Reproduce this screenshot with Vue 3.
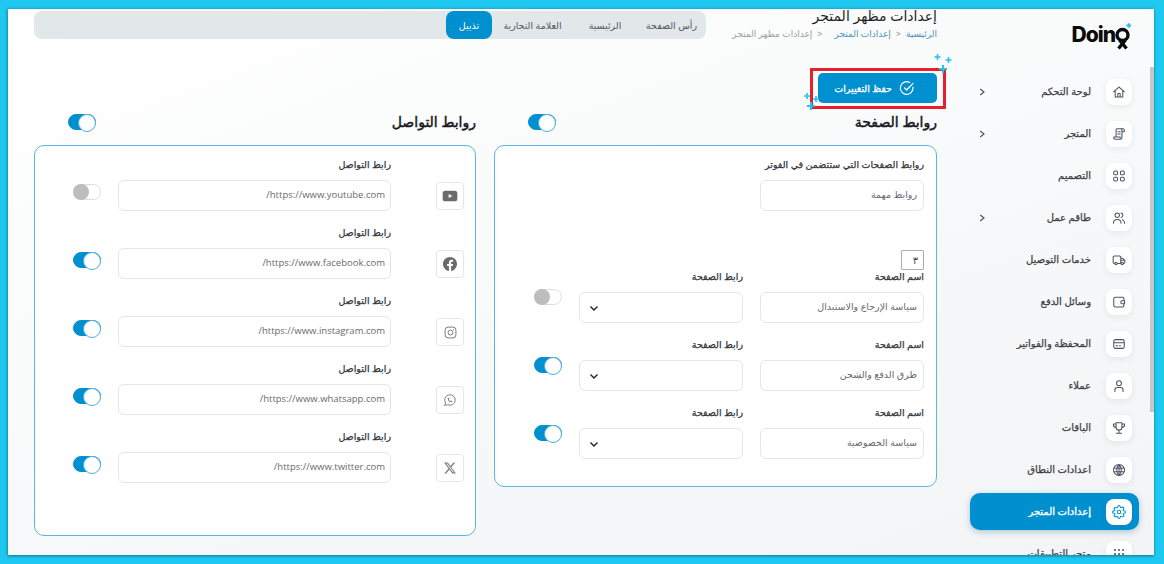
<script setup>
const icons = {
  home: 'M3 11.5 12 3.5l9 8M5.5 9.5V20.5h13V9.5M10 20.5v-6h4v6',
  scroll: 'M8 3h11a2 2 0 0 1 2 2v3h-4M17 8V5a2 2 0 0 0-2-2M7 17V5a2 2 0 0 1 2-2M17 5v13a3 3 0 0 1-3 3H5a2 2 0 0 1-2-2v-2h11v2M10 8h4M10 12h4',
  grid: 'M5 3.5h2.5a2 2 0 0 1 2 2V8a2 2 0 0 1-2 2H5a2 2 0 0 1-2-2V5.500a2 2 0 0 1 2-2ZM16.500 3.500H19a2 2 0 0 1 2 2V8a2 2 0 0 1-2 2h-2.500a2 2 0 0 1-2-2V5.500a2 2 0 0 1 2-2ZM5 14h2.500a2 2 0 0 1 2 2v2.500a2 2 0 0 1-2 2H5a2 2 0 0 1-2-2V16a2 2 0 0 1 2-2ZM16.500 14H19a2 2 0 0 1 2 2v2.500a2 2 0 0 1-2 2h-2.500a2 2 0 0 1-2-2V16a2 2 0 0 1 2-2Z',
  users: 'M9 3.500a3.800 3.800 0 1 1 0 7.600 3.800 3.800 0 0 1 0-7.600ZM2.500 21c0-4 2.800-6.500 6.500-6.500s6.500 2.500 6.500 6.500M15.500 3.500a3.800 3.800 0 0 1 0 7.500M18 14.800c2.200.8 3.500 3 3.500 6.200',
  truck: 'M5 18H4a2 2 0 0 1-2-2V7a2 2 0 0 1 2-2h9a2 2 0 0 1 2 2v11H9M15 9h3.500L22 12.500V16a2 2 0 0 1-2 2h-1M15 18h.500M5 18a2 2 0 1 0 4 0 2 2 0 0 0-4 0ZM15.500 18a2 2 0 1 0 4 0 2 2 0 0 0-4 0ZM15 12.500h7',
  wallet: 'M20.500 9V6.500a2.500 2.500 0 0 0-2.500-2.500H6a3 3 0 0 0-3 3v10.500a3 3 0 0 0 3 3h12a2.500 2.500 0 0 0 2.500-2.500V16M21.500 10h-4a2.500 2.500 0 0 0 0 5h4Z',
  card: 'M6 4.500h12a3 3 0 0 1 3 3v9a3 3 0 0 1-3 3H6a3 3 0 0 1-3-3v-9a3 3 0 0 1 3-3ZM3 10h18M7 15h2.500M13 15h1.500',
  user: 'M12 3a4.200 4.200 0 1 1 0 8.400A4.200 4.200 0 0 1 12 3ZM5 21.500V19c0-2.800 2.200-4.500 4.500-4.500h5c2.300 0 4.500 1.700 4.500 4.500v2.500',
  trophy: 'M7 3h10v7.500a5 5 0 0 1-10 0ZM7 5H2.500v1.500A4.500 4.500 0 0 0 7 11M17 5h4.500v1.500A4.500 4.500 0 0 1 17 11M12 15.500V20M7.500 21h9',
  globe: 'M12 2.500a9.500 9.500 0 1 1 0 19 9.500 9.500 0 0 1 0-19ZM12 2.500c-5.200 5-5.200 14 0 19M12 2.500c5.200 5 5.200 14 0 19M12 2.500v19M3 9h18M3 15h18',
  gear: 'M12 9a3 3 0 1 1 0 6 3 3 0 0 1 0-6ZM19.400 15a1.650 1.650 0 0 0 .33 1.820l.06.06a2 2 0 0 1 0 2.830 2 2 0 0 1-2.830 0l-.06-.06a1.650 1.650 0 0 0-1.820-.33 1.650 1.650 0 0 0-1 1.510V21a2 2 0 0 1-2 2 2 2 0 0 1-2-2v-.09A1.650 1.650 0 0 0 9 19.400a1.650 1.650 0 0 0-1.820.33l-.06.06a2 2 0 0 1-2.830 0 2 2 0 0 1 0-2.830l.06-.06a1.650 1.650 0 0 0 .33-1.820 1.650 1.650 0 0 0-1.510-1H3a2 2 0 0 1-2-2 2 2 0 0 1 2-2h.09A1.650 1.650 0 0 0 4.600 9a1.650 1.650 0 0 0-.33-1.820l-.06-.06a2 2 0 0 1 0-2.830 2 2 0 0 1 2.830 0l.06.06a1.650 1.650 0 0 0 1.820.33H9a1.650 1.650 0 0 0 1-1.510V3a2 2 0 0 1 2-2 2 2 0 0 1 2 2v.09a1.650 1.650 0 0 0 1 1.510 1.650 1.650 0 0 0 1.820-.33l.06-.06a2 2 0 0 1 2.830 0 2 2 0 0 1 0 2.830l-.06.06a1.650 1.650 0 0 0-.33 1.820V9a1.650 1.650 0 0 0 1.510 1H21a2 2 0 0 1 2 2 2 2 0 0 1-2 2h-.09a1.650 1.650 0 0 0-1.510 1Z',
  dots: 'M5 5h.01M12 5h.01M19 5h.01M5 12h.01M12 12h.01M19 12h.01M5 19h.01M12 19h.01M19 19h.01'
}

const nav = [
  { label: 'لوحة التحكم', icon: 'home', more: true },
  { label: 'المتجر', icon: 'scroll', more: true },
  { label: 'التصميم', icon: 'grid' },
  { label: 'طاقم عمل', icon: 'users', more: true },
  { label: 'خدمات التوصيل', icon: 'truck' },
  { label: 'وسائل الدفع', icon: 'wallet' },
  { label: 'المحفظة والفواتير', icon: 'card' },
  { label: 'عملاء', icon: 'user' },
  { label: 'الباقات', icon: 'trophy' },
  { label: 'اعدادات النطاق', icon: 'globe' },
  { label: 'إعدادات المتجر', icon: 'gear', active: true },
  { label: 'متجر التطبيقات', icon: 'dots' }
]

const tabs = [
  { label: 'رأس الصفحة' },
  { label: 'الرئيسية' },
  { label: 'العلامة التجارية' },
  { label: 'تذييل', active: true }
]

const pages = [
  { name: 'سياسة الإرجاع والاستبدال', on: false },
  { name: 'طرق الدفع والشحن', on: true },
  { name: 'سياسة الخصوصية', on: true }
]

const socials = [
  { key: 'youtube', url: 'https://www.youtube.com/', on: false },
  { key: 'facebook', url: 'https://www.facebook.com/', on: true },
  { key: 'instagram', url: 'https://www.instagram.com/', on: true },
  { key: 'whatsapp', url: 'https://www.whatsapp.com/', on: true },
  { key: 'x', url: 'https://www.twitter.com/', on: true }
]
</script>

<template>
  <div class="frame" dir="rtl">
    <div class="panel">
      <aside class="sidebar">
        <div class="logo" dir="ltr">
          <span class="logo-text">Doin</span>
          <svg class="logo-mark" width="17" height="28" viewBox="0 0 17 28">
            <circle cx="7.500" cy="13" r="5.500" fill="none" stroke="#0b0b0b" stroke-width="3.400" />
            <path d="M3.500 26.500 10.500 18M11.500 26.500 4.500 18" fill="none" stroke="#0b0b0b" stroke-width="3.400" />
            <path d="M11.500 3.500h4.500M13.750 1.250v4.500" stroke="#22c3ee" stroke-width="2" />
          </svg>
        </div>
        <nav class="nav">
          <div v-for="item in nav" :key="item.label" class="nav-row" :class="{ active: item.active }">
            <span class="nav-icon">
              <svg width="14" height="14" viewBox="0 0 24 24" fill="none" stroke="currentColor" :stroke-width="item.icon === 'dots' ? 3.500 : 1.800" stroke-linecap="round" stroke-linejoin="round">
                <path :d="icons[item.icon]" />
              </svg>
            </span>
            <span class="nav-label">{{ item.label }}</span>
            <svg v-if="item.more" class="nav-chevron" width="8" height="8" viewBox="0 0 8 8" fill="none" stroke="#4a4f57" stroke-width="1.100">
              <path d="M2.200 1 6 4 2.200 7" />
            </svg>
          </div>
        </nav>
        <span class="scroll-thumb"></span>
      </aside>

      <main class="main">
        <header class="top">
          <div class="page-title">
            <h1>إعدادات مظهر المتجر</h1>
            <div class="crumbs">
              <span class="crumb-link">الرئيسية</span>
              <span class="crumb-sep">&lt;</span>
              <span class="crumb-link">إعدادات المتجر</span>
              <span class="crumb-sep wide">&lt;</span>
              <span class="crumb-now">إعدادات مظهر المتجر</span>
            </div>
          </div>
          <div class="tabs">
            <button v-for="tab in tabs" :key="tab.label" class="tab" :class="{ active: tab.active }">{{ tab.label }}</button>
          </div>
        </header>

        <div class="save-row">
          <div class="save-mark">
            <button class="save">
              <svg width="16" height="16" viewBox="0 0 24 24" fill="none" stroke="#fff" stroke-width="1.800" stroke-linecap="round" stroke-linejoin="round">
                <path d="M21 10.500V12a9.500 9.500 0 1 1-5-8.300M8.500 12l3 3 9.500-10" />
              </svg>
              <span>حفظ التغييرات</span>
            </button>
            <svg class="sparkle sparkle-top" width="22" height="22" viewBox="0 0 22 22" stroke="#22c3ee" fill="none">
              <path d="M5.500 1v6M2.500 4h6M16.500 4v6M13.500 7h6" stroke-width="1.600" />
              <path d="M11 12v8M7 16h8" stroke-width="2" />
            </svg>
            <svg class="sparkle sparkle-bottom" width="22" height="22" viewBox="0 0 22 22" stroke="#22c3ee" fill="none">
              <path d="M4 1v6M1 4h6M13 4v6M10 7h6" stroke-width="1.600" />
              <path d="M8 10v8M4 14h8" stroke-width="2" />
            </svg>
          </div>
        </div>

        <div class="columns">
          <section class="col">
            <div class="col-head">
              <h2>روابط الصفحة</h2>
              <span class="toggle on"></span>
            </div>
            <div class="card card-pages">
              <label class="field-label">روابط الصفحات التي ستتضمن في الفوتر</label>
              <input class="input page-input" value="روابط مهمة" />
              <input class="count" value="٣" />
              <div v-for="page in pages" :key="page.name" class="page-row">
                <div class="field">
                  <label class="field-label">اسم الصفحة</label>
                  <input class="input" :value="page.name" />
                </div>
                <div class="field">
                  <label class="field-label">رابط الصفحة</label>
                  <div class="select">
                    <svg width="10" height="10" viewBox="0 0 10 10" fill="none" stroke="#222" stroke-width="1.400">
                      <path d="M1.500 3.500 5 7l3.500-3.500" />
                    </svg>
                  </div>
                </div>
                <span class="toggle row-toggle" :class="{ on: page.on }"></span>
              </div>
            </div>
          </section>

          <section class="col">
            <div class="col-head">
              <h2>روابط التواصل</h2>
              <span class="toggle on"></span>
            </div>
            <div class="card card-social">
              <div v-for="s in socials" :key="s.key" class="social-row">
                <span class="social-icon">
                  <svg v-if="s.key === 'youtube'" width="16" height="16" viewBox="0 0 24 24" fill="#6b6b6b">
                    <path fill-rule="evenodd" d="M5 4h14a4 4 0 0 1 4 4v8a4 4 0 0 1-4 4H5a4 4 0 0 1-4-4V8a4 4 0 0 1 4-4Zm5 5v6l5.500-3Z" />
                  </svg>
                  <svg v-else-if="s.key === 'facebook'" width="14" height="14" viewBox="0 0 24 24" fill="#6b6b6b">
                    <path d="M24 12.070C24 5.400 18.630 0 12 0S0 5.400 0 12.070c0 6.030 4.390 11.020 10.130 11.930v-8.440H7.080v-3.490h3.050V9.410c0-3.020 1.790-4.690 4.530-4.690 1.310 0 2.690.24 2.690.24v2.970h-1.520c-1.490 0-1.960.93-1.960 1.890v2.250h3.330l-.53 3.490h-2.800V24C19.610 23.090 24 18.100 24 12.070Z" />
                  </svg>
                  <svg v-else-if="s.key === 'instagram'" width="13" height="13" viewBox="0 0 24 24" fill="none" stroke="#7a7a7a" stroke-width="1.800">
                    <rect x="2" y="2" width="20" height="20" rx="5.500" />
                    <circle cx="12" cy="12" r="4.500" />
                    <path d="M17.500 6.500h.01" stroke-linecap="round" />
                  </svg>
                  <svg v-else-if="s.key === 'whatsapp'" width="14" height="14" viewBox="0 0 24 24" fill="none" stroke="#7a7a7a" stroke-width="1.600" stroke-linecap="round" stroke-linejoin="round">
                    <path d="m3 21 1.650-3.800a9 9 0 1 1 3.400 2.900L3 21" />
                    <path d="M9 10a.5.5 0 0 0 1 0V9a.5.5 0 0 0-1 0v1a5 5 0 0 0 5 5h1a.5.5 0 0 0 0-1h-1a.5.5 0 0 0 0 1" />
                  </svg>
                  <svg v-else width="12" height="12" viewBox="0 0 24 24" fill="#808080">
                    <path d="M18.901 1.153h3.680l-8.040 9.190L24 22.846h-7.406l-5.800-7.584-6.638 7.584H.474l8.600-9.830L0 1.154h7.594l5.243 6.932ZM17.610 20.644h2.039L6.486 3.240H4.298Z" />
                  </svg>
                </span>
                <div class="field social-field">
                  <label class="field-label">رابط التواصل</label>
                  <input class="input url" :value="s.url" />
                </div>
                <span class="toggle social-toggle" :class="{ on: s.on }"></span>
              </div>
            </div>
          </section>
        </div>
      </main>
    </div>
  </div>
</template>

<style>
html, body { margin: 0; padding: 0; }
</style>

<style scoped>
* { box-sizing: border-box; }

.frame {
  width: 1164px;
  height: 564px;
  padding: 9px 10px 9px 8px;
  background: #1ec8f0;
  overflow: hidden;
  font-family: "Noto Sans", "DejaVu Sans", sans-serif;
}
.panel {
  display: flex;
  height: 100%;
  overflow: hidden;
  background: linear-gradient(160deg, #ffffff 0%, #f2f4f5 100%);
  box-shadow: 0 1px 3px rgba(0, 0, 0, .35), -1px 0 3px rgba(0, 0, 0, .15);
  color: #33373d;
}

/* sidebar */
.sidebar {
  position: relative;
  flex: 0 0 217px;
  padding: 14px 22px 0 33px;
}
.logo {
  display: flex;
  justify-content: flex-end;
  align-items: flex-start;
  height: 56px;
  margin-left: -4px;
}
.logo-text {
  font-family: Inter, sans-serif;
  font-size: 21px;
  font-weight: 800;
  letter-spacing: -1px;
  line-height: 24px;
  color: #0b0b0b;
}
.logo-mark { margin-top: -1px; margin-left: 0; }
.nav { display: flex; flex-direction: column; gap: 16px; }
.nav-row {
  display: flex;
  align-items: center;
  gap: 15px;
  flex: none;
  height: 26px;
  padding-left: 8px;
}
.nav-icon {
  display: flex;
  align-items: center;
  justify-content: center;
  flex: none;
  width: 26px;
  height: 26px;
  border-radius: 8px;
  background: #fff;
  color: #4c5462;
  box-shadow: 0 2px 6px rgba(30, 50, 70, .08);
}
.nav-label {
  margin-top: -2px;
  font-size: 10px;
  font-weight: 400;
  -webkit-text-stroke: .25px currentColor;
  white-space: nowrap;
  color: #3b3f45;
}
.nav-chevron { margin-right: auto; margin-top: -1px; }
.nav-row.active {
  height: 37px;
  margin: -6px -7px -5px 0;
  padding-right: 7px;
  border-radius: 10px;
  background: #0090cf;
  box-shadow: 0 2px 6px rgba(0, 100, 150, .3);
}
.nav-row.active .nav-label { color: #fff; -webkit-text-stroke: .35px #fff; }
.nav-row.active .nav-icon { color: #0090cf; }
.scroll-thumb {
  position: absolute;
  top: 58px;
  right: 0;
  width: 4px;
  height: 345px;
  background: #c5c7c9;
}

/* main */
.main { flex: 1; min-width: 0; padding: 2px 0 0 26px; }
.top { display: flex; justify-content: space-between; align-items: flex-start; height: 28px; }
.page-title h1 {
  margin: -3px 0 0;
  font-size: 14px;
  font-weight: 500;
  line-height: 16px;
  color: #1c1f23;
  white-space: nowrap;
}
.crumbs { display: flex; gap: 5px; margin-top: 4px; font-size: 9px; line-height: 12px; white-space: nowrap; }
.crumb-link { color: #4b94bd; }
.crumb-sep { color: #8d9196; }
.crumb-sep.wide { margin-right: 7px; }
.crumb-now { color: #9a9ea3; }
.tabs {
  display: grid;
  grid-template-columns: 69px 64px 81px 46px;
  width: 672px;
  height: 28px;
  border-radius: 8px;
  background: #e2e7ea;
}
.tab {
  padding: 0;
  border: 0;
  border-radius: 8px;
  background: none;
  font: 400 9.5px "Noto Sans", "DejaVu Sans", sans-serif;
  color: #555a60;
}
.tab.active { background: #0090cf; color: #fff; }

.save-row { display: flex; margin-top: 29px; margin-right: -9px; }
.save-mark {
  position: relative;
  width: 136px;
  height: 41px;
  padding: 2px 6px 2px 5px;
  border: 3px solid #e8202e;
}
.save {
  display: flex;
  align-items: center;
  gap: 7px;
  width: 119px;
  height: 30px;
  padding: 0 22px 0 0;
  border: 0;
  border-radius: 5px;
  background: #0090cf;
  color: #fff;
  font: 400 9.5px "Noto Sans", "DejaVu Sans", sans-serif;
  -webkit-text-stroke: .3px #fff;
}
.sparkle { position: absolute; }
.sparkle-top { top: -18px; right: -11px; }
.sparkle-bottom { bottom: -8px; left: -10px; }

.columns { display: flex; gap: 18px; margin-top: 3px; }
.col { flex: 0 0 443px; }
.col + .col { flex-basis: 442px; }
.col-head {
  display: flex;
  justify-content: space-between;
  align-items: center;
  height: 20px;
  margin-bottom: 13px;
  padding-left: 34px;
}
.col-head h2 {
  margin: -2px 0 0;
  font-size: 14px;
  font-weight: 400;
  -webkit-text-stroke: .45px currentColor;
  color: #15181c;
}

.card {
  border: 1px solid #58b7e4;
  border-radius: 10px;
  background: #fff;
  padding: 12px 12px 0;
}
.card-pages { height: 342px; }
.card-social { height: 391px; padding-right: 11px; }

.field-label {
  display: block;
  height: 14px;
  margin-bottom: 8px;
  font-size: 9.5px;
  font-weight: 400;
  -webkit-text-stroke: .25px currentColor;
  line-height: 14px;
  color: #33373d;
  white-space: nowrap;
}
.input {
  display: block;
  width: 164px;
  height: 31px;
  padding: 0 6px 2px;
  border: 1px solid #e3e6ea;
  border-radius: 6px;
  outline: 0;
  background: #fff;
  font: 400 9.5px "Noto Sans", "DejaVu Sans", sans-serif;
  color: #666a70;
}
.count {
  display: block;
  width: 23px;
  height: 20px;
  margin-top: 39px;
  padding: 0 5px;
  border: 1px solid #a9adb1;
  border-radius: 1px;
  outline: 0;
  font: 400 10px "Noto Sans", "DejaVu Sans", sans-serif;
  color: #444;
}
.page-row { display: flex; gap: 17px; margin-bottom: 15px; }
.select {
  display: flex;
  align-items: center;
  justify-content: flex-end;
  width: 164px;
  height: 31px;
  padding-left: 9px;
  border: 1px solid #e3e6ea;
  border-radius: 6px;
  background: #fff;
}
.row-toggle { margin-top: 19px; }

.social-row { display: flex; margin-bottom: 15px; height: 53px; }
.social-icon {
  display: flex;
  align-items: center;
  justify-content: center;
  flex: none;
  width: 28px;
  height: 28px;
  margin-top: 24px;
  border: 1px solid #e3e6ea;
  border-radius: 4px;
  background: #fff;
}
.social-field { margin-right: 45px; }
.url { width: 273px; padding: 0 5px 2px; font-family: "Open Sans", sans-serif; font-size: 9.5px; }
.social-toggle { width: 27px; margin-top: 26px; margin-right: 17px; }

.toggle {
  position: relative;
  display: block;
  flex: none;
  width: 28px;
  height: 16px;
  border: 1px solid #dcdfe2;
  border-radius: 9px;
  background: #fff;
}
.toggle::after {
  content: "";
  position: absolute;
  top: -1px;
  left: -1px;
  width: 16px;
  height: 16px;
  border-radius: 50%;
  background: #bdbdbd;
}
.toggle.on { border-color: #0090cf; background: #0090cf; }
.toggle.on::after {
  left: auto;
  right: -1px;
  background: #fff;
  border: 1px solid #4fb0de;
}
</style>
